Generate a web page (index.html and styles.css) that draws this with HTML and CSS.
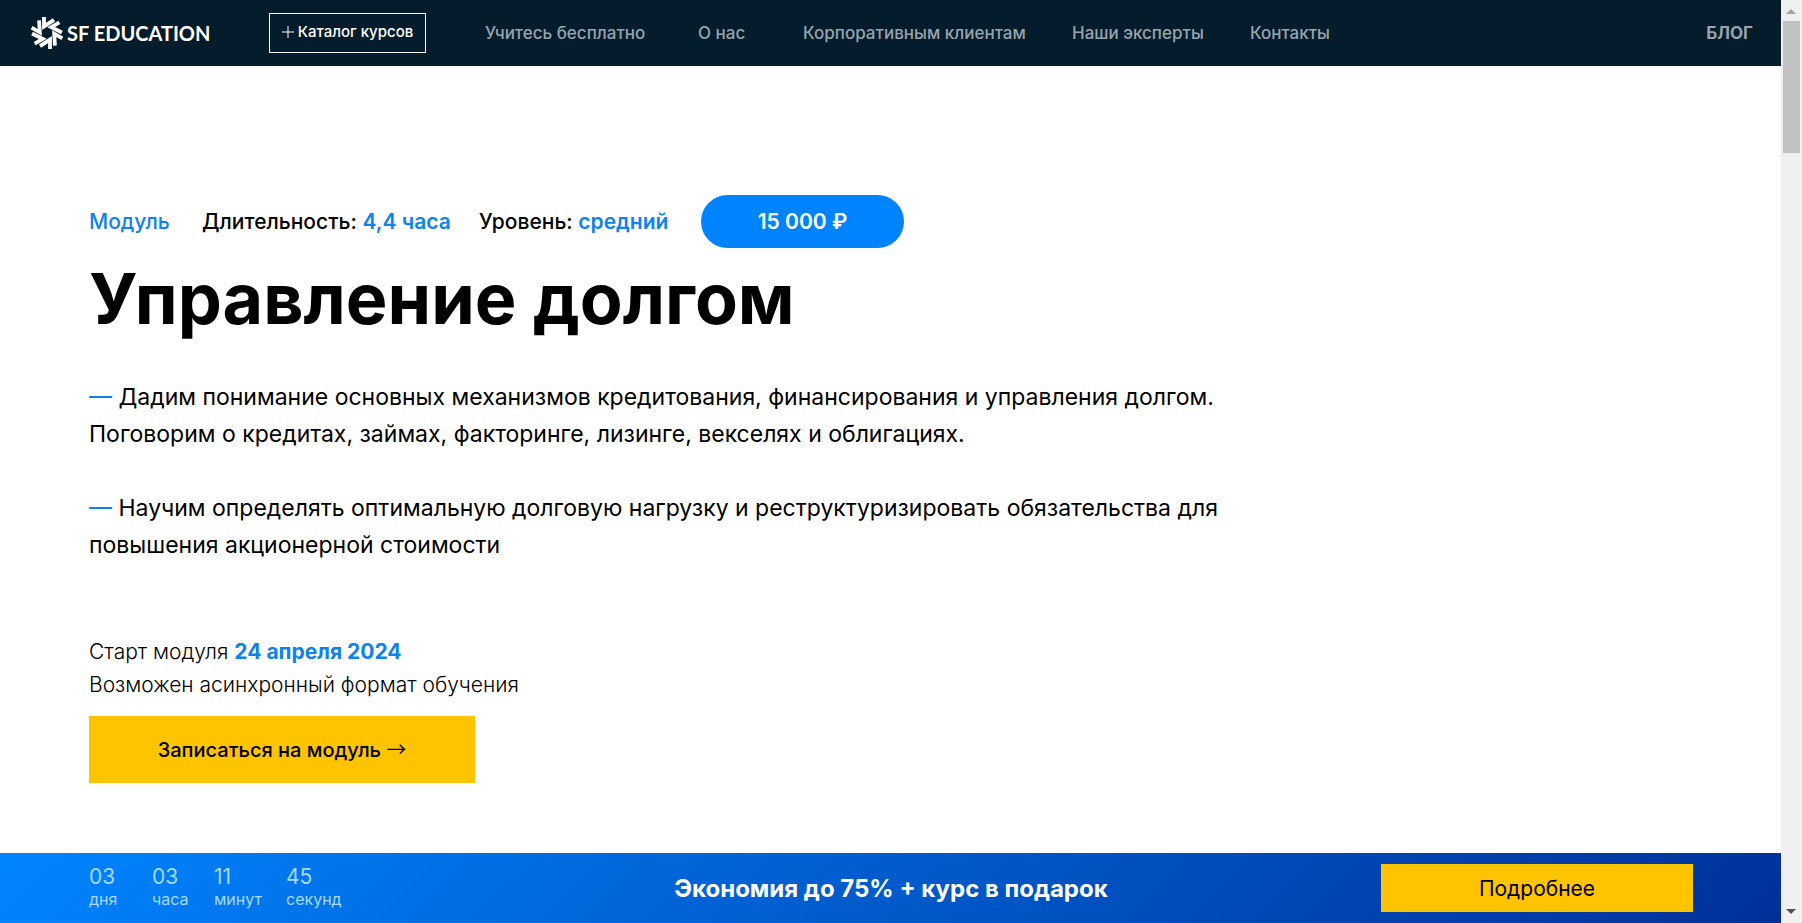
FILE: index.html
```
<!DOCTYPE html>
<html lang="ru">
	<head>
		<meta charset="utf-8">
		<title>Управление долгом</title>
		<link rel="stylesheet" href="styles.css">
	</head>

<body>
  <div class="page">
    <header class="header">
      <a class="logo" href="#">
        <svg width="34" height="34" viewBox="-17 -17 34 34" fill="none" stroke="#fff" stroke-width="3.8">
          <defs>
            <path id="ray" d="M-3 -16V-6.6L7 -13.2"/>
          </defs>
          <use href="#ray"/>
          <use href="#ray" transform="rotate(60)"/>
          <use href="#ray" transform="rotate(120)"/>
          <use href="#ray" transform="rotate(180)"/>
          <use href="#ray" transform="rotate(240)"/>
          <use href="#ray" transform="rotate(300)"/>
        </svg>
        <span>SF EDUCATION</span>
      </a>
      <button class="catalog" type="button">
        <svg width="12" height="12" viewBox="0 0 12 12" stroke="#fff"><path d="M6 0V12M0 6H12"/></svg>
        Каталог курсов
      </button>
      <nav class="nav">
        <a href="#">Учитесь бесплатно</a>
        <a href="#">О нас</a>
        <a href="#">Корпоративным клиентам</a>
        <a href="#">Наши эксперты</a>
        <a href="#">Контакты</a>
      </nav>
      <a class="blog" href="#">БЛОГ</a>
    </header>

    <main class="hero">
      <div class="meta">
        <span class="module">Модуль</span>
        <span class="length">Длительность: <b>4,4 часа</b></span>
        <span class="level">Уровень: <b>средний</b></span>
        <a class="price" href="#">15 000 ₽</a>
      </div>
      <h1>Управление долгом</h1>
      <div class="about">
        <p><i>—</i> Дадим понимание основных механизмов кредитования, финансирования и управления долгом. <br>Поговорим о кредитах, займах, факторинге, лизинге, векселях и облигациях.</p>
        <p><i>—</i> Научим определять оптимальную долговую нагрузку и реструктуризировать обязательства для повышения акционерной стоимости</p>
      </div>
      <p class="start">Старт модуля <b>24 апреля 2024</b><br>Возможен асинхронный формат обучения</p>
      <button class="signup" type="button">Записаться на модуль <span class="arrow">→</span></button>
    </main>

    <aside class="promo">
      <div class="timer">
        <div><b>03</b>дня</div>
        <div><b>03</b>часа</div>
        <div><b>11</b>минут</div>
        <div><b>45</b>секунд</div>
      </div>
      <p class="offer">Экономия до 75% + курс в подарок</p>
      <button class="more" type="button">Подробнее</button>
    </aside>
  </div>

  <div class="scroll">
    <svg width="21" height="21" viewBox="0 0 21 21" fill="#a3a3a3"><path d="M5 14L10 9L15 14Z"/></svg>
    <div class="thumb"></div>
    <svg width="21" height="21" viewBox="0 0 21 21" fill="#505050"><path d="M5 7L10 12L15 7Z"/></svg>
  </div>
</body>
</html>
```

FILE: styles.css
```
* {
	box-sizing:border-box;
}
body {
	margin:0;
	display:flex;
	min-height:100vh;
	font-family:Inter, "Liberation Sans", sans-serif;
	color:#000;
	background:#FFF;
}
a {
	text-decoration:none;
	color:inherit;
}
p, h1 {
	margin:0;
}
button {
	border:0;
	padding:0;
	font-family:inherit;
	color:#000;
	background:#FFC400;
	cursor:pointer;
}
.page {
	flex:1;
	min-width:0;
	display:flex;
	flex-direction:column;
}

.header {
	display:flex;
	align-items:center;
	height:66px;
	padding:0 28px 0 30px;
	color:#97A4AD;
	background:#041C2B;
}
.logo {
	display:flex;
	align-items:center;
	gap:3px;
	width:239px;
	font:700 20px/24px Lato, sans-serif;
	color:#FFF;
	white-space:nowrap;
}
.catalog {
	display:flex;
	align-items:center;
	justify-content:center;
	gap:4px;
	width:157px;
	height:40px;
	padding-bottom:3px;
	border:1px solid #FFF;
	font-size:15px;
	font-weight:500;
	color:#FFF;
	background:none;
	white-space:nowrap;
}
.nav {
	display:grid;
	grid-template-columns:213px 105px 269px 178px auto;
	margin-left:59px;
	font-size:17px;
	font-weight:500;
	white-space:nowrap;
}
.blog {
	margin-left:auto;
	font-size:17px;
	font-weight:700;
}

.hero {
	flex:1;
	padding:129px 89px 0;
}
.meta {
	display:flex;
	align-items:center;
	font-size:21px;
	font-weight:500;
	white-space:nowrap;
}
.meta b {
	font-weight:600;
}
.module, .meta b, .start b, .about i {
	color:#0D83EE;
}
.module {
	width:113px;
}
.length {
	width:277px;
}
.level {
	width:222px;
}
.price {
	width:203px;
	border-radius:27px;
	font-weight:600;
	line-height:53px;
	text-align:center;
	color:#FFF;
	background:#0083FF;
}
h1 {
	margin-top:5px;
	font-size:70px;
	font-weight:700;
	line-height:92px;
}
.about {
	display:flex;
	flex-direction:column;
	gap:37px;
	max-width:1140px;
	margin-top:34px;
	font-size:23px;
	line-height:37px;
}
.about i {
	font-style:normal;
}
.start {
	margin-top:71px;
	font-size:21px;
	font-weight:300;
	line-height:33px;
}
.start b {
	font-weight:700;
}
.signup {
	width:386px;
	height:67px;
	margin-top:15px;
	font-size:20px;
	font-weight:500;
}
.arrow {
	font-family:"Noto Sans CJK JP", sans-serif;
	font-weight:400;
	line-height:20px;
}

.promo {
	display:grid;
	grid-template-columns:1fr auto 1fr;
	align-items:center;
	height:70px;
	padding:0 88px 0 89px;
	background:linear-gradient(135deg, #0085FF, #003098);
}
.timer {
	display:grid;
	grid-template-columns:63px 62px 72px auto;
	font-size:16px;
	line-height:23px;
	color:#A6DBFF;
}
.timer b {
	display:block;
	font-size:21px;
	font-weight:400;
}
.offer {
	font-size:24px;
	font-weight:700;
	color:#FFF;
}
.more {
	justify-self:end;
	width:312px;
	height:48px;
	font-size:21px;
}

.scroll {
	display:flex;
	flex-direction:column;
	width:21px;
	background:#F0F0F0;
}
.thumb {
	width:17px;
	height:132px;
	margin:0 2px auto;
	background:#C1C1C1;
}
```
